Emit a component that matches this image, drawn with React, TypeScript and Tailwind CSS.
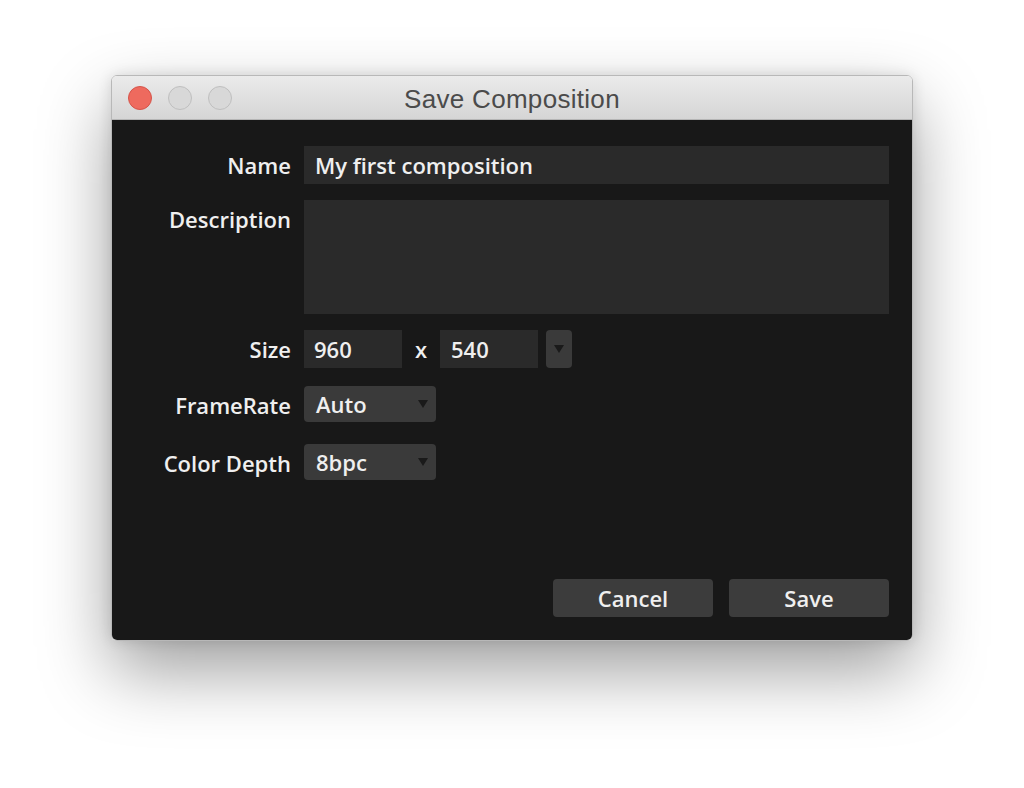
const labelCls = "h-[38px] flex items-center justify-end text-[22px] font-semibold text-[#efefef]"

function Caret() {
  return (
    <svg width="10" height="8" viewBox="0 0 10 8" className="shrink-0">
      <path d="M0 0 H10 L5 8 Z" fill="#1a1a1a" />
    </svg>
  )
}

function Select({ value }: { value: string }) {
  return (
    <div className="w-[132px] h-[36px] rounded-[4px] bg-[#3a3a3a] flex items-center justify-between pl-[12px] pr-[8px] text-[22px] font-semibold text-[#efefef]">
      <span>{value}</span>
      <Caret />
    </div>
  )
}

export default function App() {
  return (
    <div
      className="w-[1024px] h-[788px] bg-white flex justify-center pt-[75px]"
      style={{ fontFamily: '"Open Sans", "DejaVu Sans", sans-serif' }}
    >
      <div className="w-[802px] h-[566px] rounded-[6px] flex flex-col overflow-hidden border border-[#b8b8b8] shadow-[0_30px_70px_rgba(0,0,0,0.38),0_0_14px_rgba(0,0,0,0.12)]">
        <div className="h-[44px] shrink-0 bg-gradient-to-b from-[#ebebeb] to-[#d5d5d5] border-b border-[#b5b5b5] relative flex items-center justify-center">
          <div className="absolute left-[16px] top-[10px] flex gap-[16px]">
            <span className="w-[24px] h-[24px] rounded-full bg-[#ee6a5e] border border-[#d5544a]" />
            <span className="w-[24px] h-[24px] rounded-full bg-[#d8d8d8] border border-[#bfbfbf]" />
            <span className="w-[24px] h-[24px] rounded-full bg-[#d8d8d8] border border-[#bfbfbf]" />
          </div>
          <span
            className="text-[26px] text-[#4b4b4b] mt-[3px] tracking-[0.3px]"
            style={{ fontFamily: '"Liberation Sans", Arial, sans-serif' }}
          >
            Save Composition
          </span>
        </div>
        <div className="flex-1 bg-[#181818] flex flex-col pt-[26px] pr-[23px] pb-[23px]">
          <div className="grid grid-cols-[179px_1fr] gap-x-[13px]">
            <div className={labelCls}>Name</div>
            <div className="h-[38px] bg-[#2a2a2a] flex items-center px-[11px] text-[22px] font-semibold text-[#efefef]">
              My first composition
            </div>

            <div className={labelCls + " mt-[16px]"}>Description</div>
            <div className="h-[114px] bg-[#2a2a2a] mt-[16px]" />

            <div className={labelCls + " mt-[16px]"}>Size</div>
            <div className="mt-[16px] flex items-center">
              <div className="w-[98px] h-[38px] bg-[#2a2a2a] flex items-center px-[10px] text-[22px] font-semibold text-[#efefef]">960</div>
              <span className="w-[38px] text-center text-[22px] font-semibold text-[#efefef]">x</span>
              <div className="w-[98px] h-[38px] bg-[#2a2a2a] flex items-center px-[11px] text-[22px] font-semibold text-[#efefef]">540</div>
              <div className="ml-[8px] w-[26px] h-[38px] rounded-[4px] bg-[#3a3a3a] flex items-center justify-center">
                <Caret />
              </div>
            </div>

            <div className={labelCls + " mt-[18px] h-[36px]"}>FrameRate</div>
            <div className="mt-[18px]">
              <Select value="Auto" />
            </div>

            <div className={labelCls + " mt-[20px] h-[36px]"}>Color Depth</div>
            <div className="mt-[20px]">
              <Select value="8bpc" />
            </div>
          </div>
          <div className="mt-auto flex justify-end gap-[16px]">
            <button className="w-[160px] h-[38px] rounded-[4px] bg-[#3c3c3c] text-[22px] font-semibold text-[#efefef]">Cancel</button>
            <button className="w-[160px] h-[38px] rounded-[4px] bg-[#3c3c3c] text-[22px] font-semibold text-[#efefef]">Save</button>
          </div>
        </div>
      </div>
    </div>
  )
}
